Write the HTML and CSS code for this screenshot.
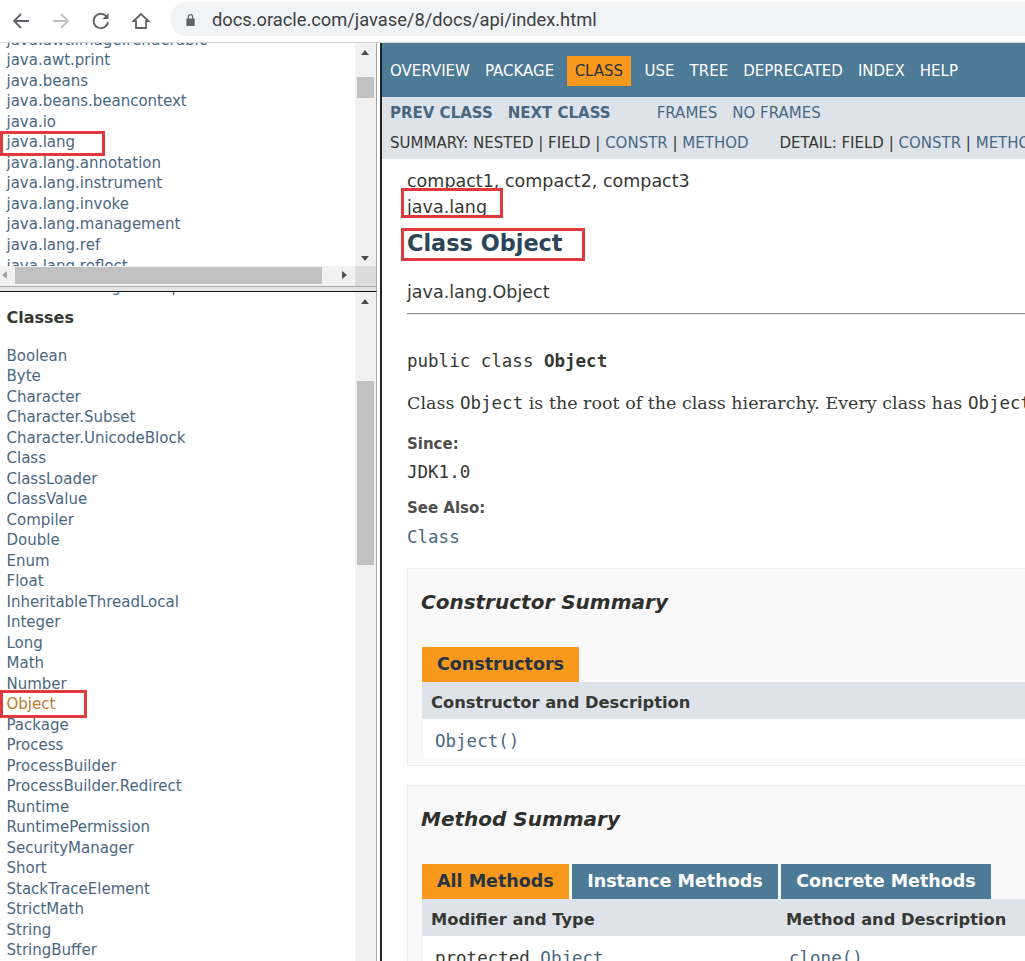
FILE: index.html
```html
<!DOCTYPE html>
<html lang="en">
<head>
	<meta charset="UTF-8">
	<title>Object (Java Platform SE 8)</title>
	<link rel="stylesheet" href="styles.css">
</head>
<body>
	<header class="toolbar">
		<svg class="tool" viewBox="0 0 20 20"><path d="M18 10H3M10 3l-7 7 7 7" fill="none" stroke="#5f6368" stroke-width="1.8"/></svg>
		<svg class="tool" viewBox="0 0 20 20"><path d="M2 10h15M10 3l7 7-7 7" fill="none" stroke="#bdc1c6" stroke-width="1.8"/></svg>
		<svg class="tool" viewBox="0 0 20 20"><path d="M16 6.2A7.2 7.2 0 1 0 17 11" fill="none" stroke="#5f6368" stroke-width="1.8"/><path d="M17.5 2v6h-6z" fill="#5f6368"/></svg>
		<svg class="tool" viewBox="0 0 20 20"><path d="M10 3L2.5 10H5v7h10v-7h2.500z" fill="none" stroke="#5f6368" stroke-width="1.800"/></svg>
		<div class="omnibox">
			<svg class="lock" viewBox="0 0 12 14"><path d="M3 6V4a3 3 0 0 1 6 0v2h1.500v8h-9V6zm1.300 0h3.400V4a1.700 1.700 0 0 0-3.400 0z" fill="#5f6368"/></svg>
			<span>docs.oracle.com/javase/8/docs/api/index.html</span>
		</div>
	</header>

	<div class="frames">
		<aside class="left">
			<div class="pane pane-top">
				<ul class="list list-top">
					<li>java.awt.image.renderable</li>
					<li>java.awt.print</li>
					<li>java.beans</li>
					<li>java.beans.beancontext</li>
					<li>java.io</li>
					<li>java.lang</li>
					<li>java.lang.annotation</li>
					<li>java.lang.instrument</li>
					<li>java.lang.invoke</li>
					<li>java.lang.management</li>
					<li>java.lang.ref</li>
					<li>java.lang.reflect</li>
				</ul>
				<div class="vbar vbar-top">
					<i class="arrow up"></i>
					<b class="thumb thumb-top"></b>
					<i class="arrow down"></i>
				</div>
				<div class="hbar">
					<i class="arrow lft"></i>
					<b class="hthumb"></b>
					<i class="arrow rgt"></i>
				</div>
				<div class="corner"></div>
				<div class="mark mark-pkg"></div>
			</div>
			<div class="divider"></div>
			<div class="pane pane-bottom">
				<div class="peek">Thread.UncaughtExceptionHandler</div>
				<h2 class="classes">Classes</h2>
				<ul class="list">
					<li>Boolean</li>
					<li>Byte</li>
					<li>Character</li>
					<li>Character.Subset</li>
					<li>Character.UnicodeBlock</li>
					<li>Class</li>
					<li>ClassLoader</li>
					<li>ClassValue</li>
					<li>Compiler</li>
					<li>Double</li>
					<li>Enum</li>
					<li>Float</li>
					<li>InheritableThreadLocal</li>
					<li>Integer</li>
					<li>Long</li>
					<li>Math</li>
					<li>Number</li>
					<li class="visited">Object</li>
					<li>Package</li>
					<li>Process</li>
					<li>ProcessBuilder</li>
					<li>ProcessBuilder.Redirect</li>
					<li>Runtime</li>
					<li>RuntimePermission</li>
					<li>SecurityManager</li>
					<li>Short</li>
					<li>StackTraceElement</li>
					<li>StrictMath</li>
					<li>String</li>
					<li>StringBuffer</li>
				</ul>
				<div class="vbar vbar-bottom">
					<i class="arrow up"></i>
					<b class="thumb thumb-bottom"></b>
				</div>
				<div class="mark mark-obj"></div>
			</div>
		</aside>

		<main class="doc">
			<nav class="topnav">
				<a>OVERVIEW</a>
				<a>PACKAGE</a>
				<a class="current">CLASS</a>
				<a>USE</a>
				<a>TREE</a>
				<a>DEPRECATED</a>
				<a>INDEX</a>
				<a>HELP</a>
			</nav>
			<div class="subnav">
				<div class="subrow">
					<a class="strong">PREV CLASS</a>
					<a class="strong">NEXT CLASS</a>
					<a class="gap-left">FRAMES</a>
					<a>NO FRAMES</a>
				</div>
				<div class="subrow2">
					<span>SUMMARY: NESTED | FIELD | <a>CONSTR</a> | <a>METHOD</a></span>
					<span class="detail">DETAIL: FIELD | <a>CONSTR</a> | <a>METHOD</a></span>
				</div>
			</div>

			<div class="content">
				<div class="profiles">compact1, compact2, compact3</div>
				<div class="pkg">java.lang</div>
				<h1 class="title">Class Object</h1>
				<div class="fqn">java.lang.Object</div>
				<hr class="rule">
				<pre class="sig">public class <b>Object</b></pre>
				<p class="desc">Class <code>Object</code> is the root of the class hierarchy. Every class has <code>Object</code> as a superclass.</p>
				<div class="label">Since:</div>
				<div class="val"><code>JDK1.0</code></div>
				<div class="label label2">See Also:</div>
				<div class="val val2"><code class="link">Class</code></div>

				<section class="summary s-ctor">
					<h3>Constructor Summary</h3>
					<div class="tabs"><span class="tab on">Constructors</span></div>
					<div class="thead">Constructor and Description</div>
					<div class="trow"><code class="link">Object()</code></div>
				</section>

				<section class="summary s-method">
					<h3>Method Summary</h3>
					<div class="tabs">
						<span class="tab on">All Methods</span>
						<span class="tab">Instance Methods</span>
						<span class="tab">Concrete Methods</span>
					</div>
					<div class="thead cols"><span class="c1">Modifier and Type</span><span>Method and Description</span></div>
					<div class="trow cols"><span class="c1b"><code>protected </code><code class="link">Object</code></span><code class="link">clone()</code></div>
				</section>
			</div>
			<div class="mark mark-lang"></div>
			<div class="mark mark-title"></div>
		</main>
	</div>
</body>
</html>
```

FILE: styles.css
```css
*{
	margin: 0;
	padding: 0;
	box-sizing: border-box;
}
html, body{
	height: 100%;
	overflow: hidden;
}
body{
	font-family: "DejaVu Sans", sans-serif;
	background-color: #fff;
	color: #353833;
}
code, pre{
	font-family: "DejaVu Sans Mono", monospace;
}
ul{
	list-style: none;
}

/* browser bar */
.toolbar{
	height: 43px;
	display: flex;
	align-items: center;
	padding-left: 11px;
	background-color: #fff;
	border-bottom: 1px solid #d8d8d8;
}
.tool{
	width: 20px;
	height: 20px;
	margin-right: 20px;
	flex: none;
}
.tool:nth-child(4){
	margin-right: 19px;
}
.omnibox{
	flex: 1;
	height: 34px;
	margin-top: -4px;
	display: flex;
	align-items: center;
	padding-left: 15px;
	background-color: #f1f3f4;
	border-radius: 17px 0 0 17px;
	font-family: "Roboto", sans-serif;
	font-size: 18.3px;
	color: #3c4043;
}
.lock{
	width: 11px;
	height: 13px;
	margin-right: 16px;
}

.frames{
	height: 918px;
	display: flex;
}

/* left frames */
.left{
	width: 382px;
	flex: none;
	display: flex;
	flex-direction: column;
	border-right: 2px solid #222;
	padding-right: 3px;
}
.pane{
	position: relative;
	overflow: hidden;
	border-right: 1px solid #a9a9a9;
}
.pane-top{
	height: 243px;
}
.divider{
	height: 6px;
	flex: none;
	background-color: #e4e4e4;
	border-top: 1px solid #a9a9a9;
	border-bottom: 1px solid #111;
	border-right: 1px solid #a9a9a9;
}
.pane-bottom{
	flex: 1;
}
.list{
	font-size: 15px;
	line-height: 20.5px;
	color: #4a6782;
	padding-left: 6.5px;
}
.list-top{
	margin-top: -13.5px;
	height: 240px;
	overflow: hidden;
	line-height: 20.55px;
}
.visited{
	color: #bb7a2a;
}
.peek{
	font-size: 15px;
	line-height: 20px;
	height: 20px;
	margin-top: -15px;
	padding-left: 6.5px;
	overflow: hidden;
	color: #4a6782;
	white-space: nowrap;
}
.classes{
	font-size: 16px;
	line-height: 20px;
	margin: 11px 0 17.5px 6.5px;
	color: #353833;
}

/* fake scrollbars, the frames are not really scrollable here */
.vbar{
	position: absolute;
	top: 0;
	right: 0;
	width: 21px;
	background-color: #f1f1f1;
}
.vbar-top{
	height: 223px;
}
.vbar-bottom{
	bottom: 0;
}
.thumb{
	position: absolute;
	left: 2px;
	width: 17px;
	background-color: #c1c1c1;
}
.thumb-top{
	top: 34px;
	height: 21px;
}
.thumb-bottom{
	top: 89px;
	height: 184px;
}
.arrow{
	position: absolute;
	width: 0;
	height: 0;
	border: 4px solid transparent;
}
.up{
	top: 7px;
	left: 6px;
	border-top: 0;
	border-bottom: 5px solid #505050;
}
.down{
	bottom: 5px;
	left: 6px;
	border-bottom: 0;
	border-top: 5px solid #505050;
}
.hbar{
	position: absolute;
	left: 0;
	right: 21px;
	top: 223px;
	height: 20px;
	background-color: #f1f1f1;
}
.hthumb{
	position: absolute;
	left: 15px;
	top: 1px;
	width: 307px;
	height: 17px;
	background-color: #c1c1c1;
}
.lft{
	left: 2px;
	top: 5px;
	border-left: 0;
	border-right: 5px solid #a3a3a3;
}
.rgt{
	left: 342px;
	top: 5px;
	border-right: 0;
	border-left: 5px solid #505050;
}
.corner{
	position: absolute;
	right: 0;
	top: 223px;
	width: 21px;
	height: 20px;
	background-color: #dcdcdc;
}

/* annotation boxes */
.mark{
	position: absolute;
	border: 3px solid #e0393e;
}
.mark-pkg{
	left: 0;
	top: 88px;
	width: 105px;
	height: 25px;
}
.mark-obj{
	left: 0;
	top: 398px;
	width: 87px;
	height: 28px;
}
.mark-lang{
	left: 19px;
	top: 145px;
	width: 102px;
	height: 30px;
}
.mark-title{
	left: 19px;
	top: 185px;
	width: 184px;
	height: 33px;
}

/* right frame */
.doc{
	position: relative;
	flex: 1;
	min-width: 0;
	overflow: hidden;
}
.topnav{
	height: 54px;
	display: flex;
	align-items: center;
	padding: 2px 0 0 8px;
	background-color: #4d7a97;
	font-size: 15px;
	color: #fff;
}
.topnav a{
	margin-right: 15px;
	white-space: nowrap;
}
.topnav .current{
	height: 30px;
	line-height: 30px;
	padding: 0 7.5px;
	margin: 0 14px 0 -2px;
	background-color: #f8981d;
	color: #253441;
}
.subnav{
	height: 62px;
	background-color: #dee3e9;
	font-size: 15px;
	color: #353833;
	padding-left: 8px;
	white-space: nowrap;
}
.subnav a{
	color: #4a6782;
}
.subrow{
	display: flex;
	gap: 15px;
	padding-top: 6px;
	height: 32px;
	line-height: 20px;
}
.subrow .strong{
	font-weight: bold;
}
.subrow .gap-left{
	margin-left: 31px;
}
.subrow2{
	line-height: 20px;
	padding-top: 4px;
	display: flex;
}
.subrow2 .detail{
	margin-left: 31px;
}
.content{
	padding: 11px 0 0 25px;
	white-space: nowrap;
	font-size: 17.5px;
}
.profiles{
	line-height: 22px;
}
.pkg{
	line-height: 22px;
	margin-top: 4px;
}
.title{
	font-size: 22.4px;
	line-height: 30px;
	margin-top: 10px;
	color: #2c4557;
}
.fqn{
	margin-top: 23px;
	line-height: 22px;
}
.rule{
	border: 0;
	border-top: 1px solid #8e8e8e;
	border-bottom: 1px solid #eee;
	height: 2px;
	margin-top: 10px;
}
.sig{
	margin-top: 35px;
	font-size: 17.5px;
	line-height: 22px;
}
.desc{
	font-family: "DejaVu Serif", serif;
	font-size: 17.5px;
	line-height: 22px;
	margin-top: 20px;
}
.desc code{
	font-size: 17.5px;
}
.label{
	font-size: 15px;
	font-weight: bold;
	line-height: 20px;
	margin-top: 20px;
	color: #4e4e4e;
}
.label2{
	margin-top: 15px;
}
.val{
	font-size: 17.5px;
	line-height: 22px;
	margin-top: 7px;
}
.val2{
	margin-top: 8px;
}
.link{
	color: #4a6782;
}
.summary{
	background-color: #f9f9f9;
	border: 1px solid #ededed;
	border-right: 0;
	padding-left: 14px;
}
.s-ctor{
	margin-top: 20px;
	height: 198px;
}
.s-method{
	margin-top: 19px;
	height: 220px;
}
.summary h3{
	font-size: 20px;
	font-style: italic;
	font-weight: bold;
	line-height: 26px;
	margin: 20px 0 0 -1px;
	color: #2f2f2c;
}
.tabs{
	display: flex;
	gap: 3.5px;
	margin-top: 32px;
}
.tab{
	height: 35px;
	line-height: 35px;
	padding: 0 15px;
	font-size: 17.5px;
	font-weight: bold;
	color: #fff;
	background-color: #4d7a97;
}
.tab.on{
	background-color: #f8981d;
	color: #253441;
}
.thead{
	height: 37px;
	line-height: 41px;
	padding-left: 9px;
	background-color: #dee3e9;
	font-size: 16.3px;
	font-weight: bold;
}
.trow{
	height: 38px;
	line-height: 44px;
	padding-left: 12px;
	background-color: #fff;
	font-size: 17.5px;
	border-left: 1px solid #f4f4f4;
}
.cols{
	display: flex;
}
.c1{
	width: 355px;
	flex: none;
}
.c1b{
	width: 354px;
	flex: none;
}
```
